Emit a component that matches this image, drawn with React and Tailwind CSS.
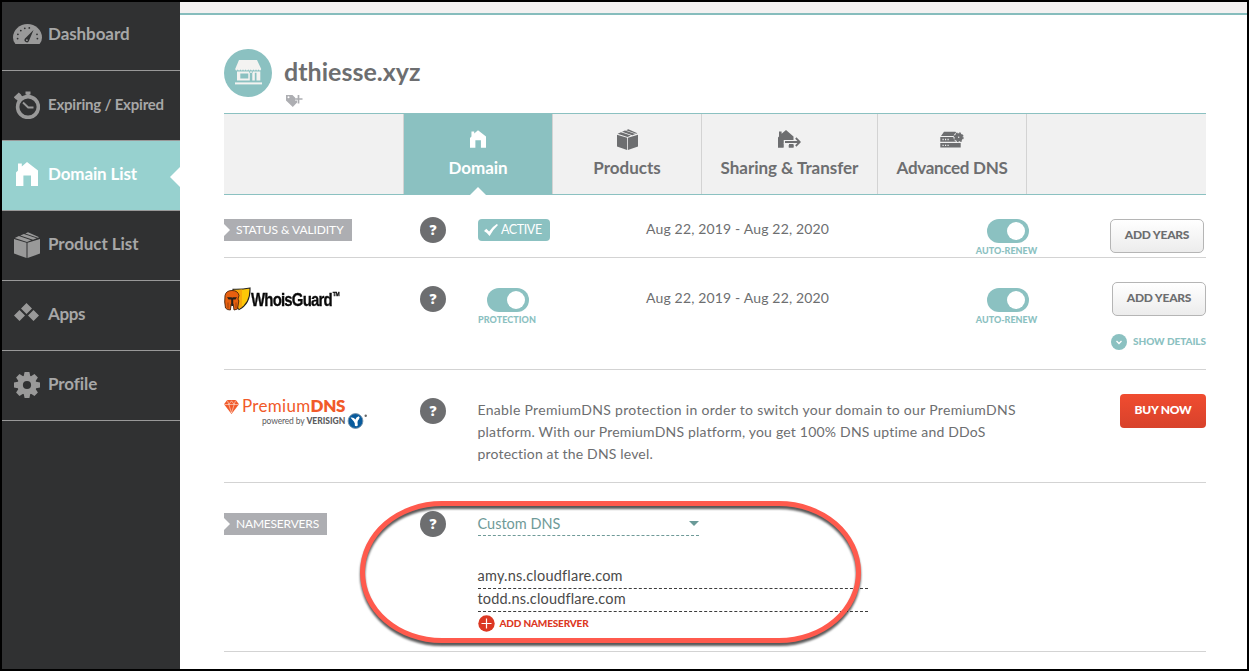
function HouseIcon({ className }) {
  return (
    <svg className={className} viewBox="0 0 22 24" fill="currentColor">
      <path d="M0 10.500 2 8.500V1.600h3.800v3L11 0l11 8.500V24h-7V13.600H7.400V24H0z" />
    </svg>
  );
}

function BoxIcon({ className }) {
  return (
    <svg className={className} viewBox="0 0 26 26" fill="currentColor">
      <path d="M0 7 12.500 10.800v15.200L0 21.600zM13.500 10.800 26 7v14.600L13.500 26zM.800 5.900 4.900 4.100l12.300 4.100-4.200 1.700zM6.300 3.500l3.600-1.500 12.800 4.200-3.700 1.500zM11.300 1.400 14 .200l11.200 5-1.500.6z" />
    </svg>
  );
}

function GaugeIcon() {
  const ticks = [[4.6, 14.6], [4.9, 10.3], [7.8, 6.6], [11.8, 4.3], [16.3, 3.9], [24, 10.3], [24.4, 14.6]];
  return (
    <svg className="h-5 w-[29px]" viewBox="0 0 29 20">
      <path d="M2.400 20Q0 17.500 0 13.500A14.500 13.500 0 0 1 29 13.500Q29 17.500 26.600 20z" fill="#999" />
      {ticks.map(([x, y]) => (
        <circle key={x + "-" + y} cx={x} cy={y} r=".9" fill="#303132" />
      ))}
      <path d="M20.500 6 12 14.600a2.300 2.300 0 1 0 4 2.200z" fill="#303132" />
      <circle cx="13.9" cy="16.2" r=".9" fill="#999" />
    </svg>
  );
}

function StopwatchIcon() {
  return (
    <svg className="h-[28px] w-[26px]" viewBox="0 0 26 28" fill="none" stroke="#999">
      <circle cx="14" cy="16" r="10.4" strokeWidth="3.6" />
      <path d="M14 6V1M11.500 1.900h5" strokeWidth="3" />
      <path d="M3.500 9.500 8 5M1 7.500 6 2.600" strokeWidth="3.4" />
      <path d="M9 11.500l5.200 5h5.300" strokeWidth="1.9" />
    </svg>
  );
}

function AppsIcon() {
  return (
    <svg className="h-[18px] w-[25px]" viewBox="0 0 25 18" fill="#999">
      <path d="M12.500 0 18 5.500 12.500 11 7 5.500zM5.500 7 11 12.500 5.500 18 0 12.500zM19.500 7l5.500 5.500-5.500 5.500-5.500-5.500z" />
    </svg>
  );
}

function GearIcon({ className, hole }) {
  return (
    <svg className={className} viewBox="0 0 26 26" fill="currentColor">
      {[0, 45, 90, 135].map((a) => (
        <path key={a} d="M10.600 0h4.800l1.100 5v16l-1.100 5h-4.800l-1.100-5V5z" transform={`rotate(${a} 13 13)`} />
      ))}
      <circle cx="13" cy="13" r="9.6" />
      <circle cx="13" cy="13" r="4.1" fill={hole} />
    </svg>
  );
}

function TransferIcon() {
  return (
    <svg className="h-[18px] w-[23px]" viewBox="0 0 23 18">
      <path d="M0 7.500 1 6.600V1.500h2.600v2.200L8 0l7.500 6.500v11H11V13H5.500v4.500H0z" fill="#6d6e70" />
      <path d="M5.500 12h17M17.800 7.800l4.200 4.200-4.200 4.200" fill="none" stroke="#f1f1f1" strokeWidth="4" />
      <path d="M0 8h5.500v9.500H0zM10.700 15h4.800v2.500h-4.800z" fill="#6d6e70" />
      <path d="M7 12h14.500M17.800 8l4 4-4 4" fill="none" stroke="#6d6e70" strokeWidth="1.8" />
    </svg>
  );
}

function ServerIcon() {
  return (
    <svg className="h-[17px] w-[24px]" viewBox="0 0 24 17">
      <path d="M4 .800h11.500L18 5H1zM.300 6h20.400v4.800H.300zM.300 12h20.400v4.500H.300z" fill="#6d6e70" />
      <path d="M2.500 8.500h1.200M5 8.500h1.200M7.500 8.500h1.200M2.500 14.400h1.200M5 14.400h1.200M7.500 14.400h1.200" stroke="#f1f1f1" strokeWidth="1.4" />
      <circle cx="18.7" cy="6.3" r="5.2" fill="#f1f1f1" />
      <circle cx="18.7" cy="6.3" r="4.1" fill="#6d6e70" />
      <circle cx="18.7" cy="6.3" r="4.3" fill="none" stroke="#6d6e70" strokeWidth="1.4" strokeDasharray="1.69 1.69" />
      <circle cx="18.7" cy="6.3" r=".7" fill="#f1f1f1" />
    </svg>
  );
}

function StoreIcon() {
  return (
    <svg className="h-[25px] w-[27px]" viewBox="0 0 27 25" fill="#f4f3f1">
      <path d="M4 0h18l4.200 9H.200z" />
      <path d="M.200 9h26q-.4 1.500-1.300 1.500T23.600 9.300q-.4 1.200-1.300 1.200T21 9.300q-.4 1.200-1.300 1.200t-1.300-1.200q-.4 1.200-1.300 1.200t-1.300-1.200q-.4 1.200-1.300 1.200t-1.300-1.200q-.4 1.200-1.300 1.200t-1.300-1.200q-.4 1.200-1.300 1.200T8 9.300q-.4 1.200-1.300 1.200T5.400 9.300q-.4 1.200-1.300 1.200T2.800 9.300q-.4 1.200-1.300 1.200T.200 9z" />
      <path fillRule="evenodd" d="M2 11.500h12.800v9H2zm3.300 2v5h8v-5zM17.300 11.500h8v9h-3.800v-7.700h-1.700v7.700h-2.500zM14 11.500h4v1.300h-4z" />
      <path d="M0 22.400h27v2H0z" />
    </svg>
  );
}

const nav = [
  { label: "Dashboard", icon: <GaugeIcon />, box: "h-[69px] pb-[4px] pl-[11px]", text: "ml-[6px] text-[17px] tracking-[-0.08px]" },
  { label: "Expiring / Expired", icon: <StopwatchIcon />, box: "h-[70px] pb-[2px] pl-[12px]", text: "ml-[8px] text-[15px] tracking-[-0.2px]" },
  { label: "Domain List", icon: <HouseIcon className="h-6 w-[22px]" />, box: "h-[70px] bg-[#97d1cf] pb-[3px] pl-[14px] text-white", text: "ml-[10px] text-[17px] tracking-[-0.13px]", active: true },
  { label: "Product List", icon: <BoxIcon className="h-[26px] w-[26px]" />, box: "h-[70px] pb-[2px] pl-[12px]", text: "-mt-px ml-[8px] text-[17px] tracking-[-0.05px]" },
  { label: "Apps", icon: <span className="-mt-[4px]"><AppsIcon /></span>, box: "h-[70px] pb-[3px] pl-[12px]", text: "ml-[9px] text-[17px] tracking-[-0.39px]" },
  { label: "Profile", icon: <GearIcon className="h-[26px] w-[26px]" hole="#303132" />, box: "h-[70px] pb-[2px] pl-[12px]", text: "-mt-px ml-[8px] text-[17px] tracking-[-0.08px]" },
];

function Sidebar() {
  return (
    <nav className="w-[178px] shrink-0 bg-[#303132] font-bold text-[#999]">
      {nav.map((n) => (
        <a key={n.label} className={`relative flex items-center border-b border-[#999] ${n.box}`}>
          {n.icon}
          <span className={`whitespace-nowrap ${n.text} ${n.active ? "text-white" : "text-[#a7a7a7]"}`}>{n.label}</span>
          {n.active && (
            <svg className="absolute top-[26px] right-0 h-5 w-2.5" viewBox="0 0 10 20" fill="#fff">
              <path d="M10 0v20L0 10z" />
            </svg>
          )}
        </a>
      ))}
    </nav>
  );
}

function Help() {
  return (
    <span className="flex size-[26px] items-center justify-center rounded-full bg-[#6d6e70] font-['Open_Sans'] text-[14px] leading-none font-extrabold text-white">
      ?
    </span>
  );
}

function Tag({ children, className }) {
  return (
    <span className={`flex h-[22px] items-center bg-[#adaeb2] text-[12px] whitespace-nowrap text-white ${className}`}>
      <svg className="mr-[6px] h-3 w-[6px]" viewBox="0 0 6 12" fill="#fff">
        <path d="M0 0l6 6-6 6z" />
      </svg>
      <span className="-mt-px">{children}</span>
    </span>
  );
}

function Toggle({ label, className, text }) {
  return (
    <div className="flex w-[62px] flex-col items-center">
      <span className={`relative flex h-6 w-[42px] items-center justify-end rounded-full bg-[#8bc1c1] pr-[4px] ${className}`}>
        <span className="size-[18px] rounded-full bg-white" />
      </span>
      <span className={`mt-[3px] text-[9px] leading-[10px] font-black whitespace-nowrap text-[#8bc1c1] ${text}`}>{label}</span>
    </div>
  );
}

function GrayButton() {
  return (
    <button className="h-[34px] w-[94px] rounded-[5px] border border-[#b5b5b5] bg-linear-to-b from-white to-[#ececec] pb-[3px] text-[12px] font-black tracking-[-0.24px] whitespace-nowrap text-[#6d6e70]">
      ADD YEARS
    </button>
  );
}

function WhoisGuardLogo() {
  return (
    <div className="flex h-6 w-[118px] items-center">
      <svg className="h-6 w-[27px] shrink-0" viewBox="0 0 27 24">
        <path d="M9 2.200Q18 2.500 26 1 26.500 17 15 22.500L9 12z" fill="#fdc708" stroke="#222" strokeWidth="1.1" />
        <path d="M9 3Q14 3.200 18 2.500V20l-3 2L9 12z" fill="#f9a80a" />
        <path d="M1 8.500Q2 3.500 8 3.500t7 5L14 12l.8 2-1.300 8-3.500 1-.8-6h-2l-.8 6-3-.5L1.500 21 .700 15z" fill="#e8600f" stroke="#4a240c" strokeWidth=".9" />
        <path d="M3 10.200h4.400l.8.600.8-.6h4l-1.500 2.200H9.200V19H7.200v-6.600H4.600z" fill="#28201a" />
        <path d="M4 15.500v6M12 15.500v5.500" stroke="#8a3b0c" strokeWidth=".8" />
      </svg>
      <span className="origin-left scale-x-[0.833] pt-px font-['Liberation_Sans'] text-[18px] leading-6 font-bold tracking-[-1px] whitespace-nowrap text-[#0a0a0a] [-webkit-text-stroke:0.3px_#0a0a0a]">
        WhoisGuard
        <sup className="ml-[1px] align-[7px] text-[6px] leading-none tracking-[-0.3px]">TM</sup>
      </span>
    </div>
  );
}

function PremiumDnsLogo() {
  return (
    <div className="w-[145px]">
      <div className="flex h-[18px] items-center">
        <svg className="h-[14px] w-[15px]" viewBox="0 0 15 14">
          <path d="M3.200 0h8.600L15 4.300 7.500 14 0 4.300z" fill="#f15a29" />
          <path d="M.400 4.500h14.200M4.800 4.500 7.500 13l2.700-8.500M3.400.6l1.500 3.800L7.500.8l2.600 3.600L11.600.6" fill="none" stroke="#fff" strokeWidth=".5" />
        </svg>
        <span className="-mt-[2px] ml-[3px] text-[17px] leading-[18px] whitespace-nowrap text-[#f15a29]">
          <span className="tracking-[0.3px]">Premium</span>
          <span className="font-extrabold tracking-[-0.3px]">DNS</span>
        </span>
      </div>
      <div className="-mt-[3px] flex items-center pl-[38px] text-[8.5px] leading-4 whitespace-nowrap text-[#5b5c5e]">
        <span className="tracking-[-0.16px]">powered by</span>
        <span className="ml-[2px] font-black">VERISIGN</span>
        <svg className="ml-[2px] h-4 w-5" viewBox="0 0 20 16">
          <circle cx="8.500" cy="8" r="7.400" fill="#075a9c" stroke="#7792a8" strokeWidth=".9" />
          <path d="M3.500 4.600Q6.900 4 8.400 6.600q.6-2.800 3.300-3.400 1.800 1.200.2 3Q10.300 7.800 10.500 9.500l.3 3.100q-1.500 1-2.900.2.300-3-1.200-4.600T3.500 4.600z" fill="#fff" />
          <circle cx="18.700" cy="2.700" r="1.200" fill="#666" />
        </svg>
      </div>
    </div>
  );
}

const tabs = [
  { label: "Domain", w: "w-[149px]", ls: "tracking-[-0.1px]", icon: <HouseIcon className="h-[18px] w-4" />, active: true },
  { label: "Products", w: "w-[149px]", ls: "tracking-[0px]", icon: <BoxIcon className="h-[21px] w-[21px]" /> },
  { label: "Sharing & Transfer", w: "w-[176px]", ls: "tracking-[-0.03px]", icon: <TransferIcon /> },
  { label: "Advanced DNS", w: "w-[149px]", ls: "tracking-[-0.3px]", icon: <ServerIcon /> },
];

function Tabs() {
  return (
    <div className="mt-[16px] flex h-[82px] border-y border-[#8bc1c1] bg-[#f1f1f1] pl-[179px]">
      {tabs.map((t) => (
        <div
          key={t.label}
          className={`relative flex flex-col items-center border-l border-[#d3d3d3] text-[17px] font-bold whitespace-nowrap ${t.w} ${t.active ? "bg-[#8bc1c1] text-white" : "text-[#6d6e70]"}`}
        >
          <span className="mt-[13px] flex h-6 items-center">{t.icon}</span>
          <span className={`mt-[6px] leading-[21px] ${t.ls}`}>{t.label}</span>
          {t.active && (
            <svg className="absolute bottom-[-1px] left-[66px] h-2 w-4" viewBox="0 0 16 8" fill="#fff">
              <path d="M8 0l8 8H0z" />
            </svg>
          )}
        </div>
      ))}
      <div className="border-l border-[#d3d3d3]" />
    </div>
  );
}

function Dates({ className }) {
  return (
    <div className={`w-[329px] leading-[20px] tracking-[0.16px] whitespace-nowrap ${className}`}>Aug 22, 2019 - Aug 22, 2020</div>
  );
}

export default function App() {
  return (
    <div className="relative h-[671px] w-[1249px] overflow-hidden border-2 border-black bg-white font-['Lato',sans-serif] text-[14px] text-[#6d6e70]">
      <div className="flex h-full">
        <Sidebar />
        <main className="w-[1067px]">
          <div className="h-[13px] border-b-2 border-[#86bdbd] bg-[#f3f1f1]" />
          <div className="w-[1026px] pl-[44px]">
            <header className="flex h-[82px] pt-[34px]">
              <span className="flex size-12 items-center justify-center rounded-full bg-[#8bc1c1] pb-px">
                <StoreIcon />
              </span>
              <div className="ml-3">
                <h1 className="mt-[7px] text-[25px] leading-[30px] font-bold tracking-[0.02px]">dthiesse.xyz</h1>
                <svg className="mt-[8px] ml-[2px] h-[13px] w-[17px]" viewBox="0 0 17 13" fill="#adaeb2">
                  <path fillRule="evenodd" d="M0 1h6.500l6 6L6.800 13 0 6.500zM2.500 2.300a1 1 0 1 0 0 2 1 1 0 0 0 0-2z" />
                  <path d="M9 5h8M12.500 .500v8.500" stroke="#fff" strokeWidth="3" />
                  <path d="M9 5h7.500M12.500 1v8.500" stroke="#adaeb2" strokeWidth="1.7" />
                </svg>
              </div>
            </header>
            <Tabs />

            <section className="flex h-[63px] border-b border-[#d3d3d3] pt-[22px]">
              <div className="w-[196px] pt-[2px]">
                <Tag className="w-[128px] tracking-[-0.08px]">STATUS &amp; VALIDITY</Tag>
              </div>
              <div className="w-[58px]"><Help /></div>
              <div className="w-[168px] pt-[2px]">
                <span className="flex h-[22px] w-[72px] items-center rounded-[4px] bg-[#8bc1c1] pl-[6px] text-[12.5px] tracking-[-0.4px] text-white">
                  <svg className="mr-[3px] h-3 w-[14px]" viewBox="0 0 14 12" fill="#fff">
                    <path d="M0 7l2.300-2.200 2.800 2.700Q8 3 12.800 0l1.200 1Q9 5.500 5.600 12 3.500 9 0 7z" />
                  </svg>
                  ACTIVE
                </span>
              </div>
              <Dates className="pt-[2px]" />
              <div className="w-[135px] pt-[2px]"><Toggle label="AUTO-RENEW" className="left-[2px]" text="relative left-[0.5px]" /></div>
              <div className="pt-[2px]"><GrayButton /></div>
            </section>

            <section className="flex h-[112px] border-b border-[#d3d3d3] pt-[24px]">
              <div className="w-[196px] pt-[5px]"><WhoisGuardLogo /></div>
              <div className="w-[57px] pt-[4px]"><Help /></div>
              <div className="w-[169px] pt-[6px]"><Toggle label="PROTECTION" text="relative -left-px tracking-[0.07px]" /></div>
              <Dates className="pt-[6px]" />
              <div className="w-[62px] pt-[6px]"><Toggle label="AUTO-RENEW" className="left-[2px]" text="relative left-[0.5px]" /></div>
              <div className="ml-auto flex flex-col items-end">
                <GrayButton />
                <a className="mt-[18px] flex items-center text-[10px] leading-4 font-black tracking-[-0.05px] whitespace-nowrap text-[#8bc1c1]">
                  <svg className="mr-[6px] size-4" viewBox="0 0 16 16">
                    <circle cx="8" cy="8" r="8" fill="#8bc1c1" />
                    <path d="M5.500 7 8 9.500 10.500 7" fill="none" stroke="#fff" strokeWidth="1.3" />
                  </svg>
                  <span className="-mt-[2px]">SHOW DETAILS</span>
                </a>
              </div>
            </section>

            <section className="flex h-[113px] border-b border-[#d3d3d3] pt-[24px]">
              <div className="w-[196px] pt-[4px]"><PremiumDnsLogo /></div>
              <div className="w-[57.5px] pt-[4px]"><Help /></div>
              <p className="pt-[5px] leading-[22px] whitespace-nowrap">
                <span className="tracking-[0.315px]">Enable PremiumDNS protection in order to switch your domain to our PremiumDNS</span>
                <br />
                <span className="tracking-[0.205px]">platform. With our PremiumDNS platform, you get 100% DNS uptime and DDoS</span>
                <br />
                <span className="tracking-[0.17px]">protection at the DNS level.</span>
              </p>
              <button className="ml-auto h-[34px] w-[86px] rounded-[4px] bg-linear-to-b from-[#f04c30] to-[#d8422b] pb-[3px] text-[12px] font-black tracking-[-0.22px] whitespace-nowrap text-white">
                BUY NOW
              </button>
            </section>

            <section className="flex h-[169px] border-b border-[#d3d3d3] pt-[28px]">
              <div className="w-[196px] pt-[2px]">
                <Tag className="w-[103px] tracking-[-0.2px]">NAMESERVERS</Tag>
              </div>
              <div className="w-[57.5px]"><Help /></div>
              <div className="w-[390px] text-[14.5px]">
                <div className="flex h-[25px] w-[221px] items-center justify-between border-b border-dashed border-[#6f9a98] pt-px text-[#6f9a98]">
                  Custom DNS
                  <svg className="h-[5px] w-[10px]" viewBox="0 0 10 5" fill="#6a9a98">
                    <path d="M0 0h10L5 5z" />
                  </svg>
                </div>
                <div className="mt-[30px] flex h-[23px] items-center border-b border-dashed border-[#3d3d3d] pb-[2px] tracking-[0.22px] text-[#4a4a4a]">amy.ns.cloudflare.com</div>
                <div className="flex h-[23px] items-center border-b border-dashed border-[#3d3d3d] pb-[2px] tracking-[0.18px] text-[#4a4a4a]">todd.ns.cloudflare.com</div>
                <a className="mt-[3px] flex items-center text-[10px] font-black tracking-[-0.17px] text-[#dc3823]">
                  <svg className="mr-[5px] size-[17px]" viewBox="0 0 17 17">
                    <circle cx="8.5" cy="8.5" r="8.2" fill="#dc3823" />
                    <path d="M3.500 8.500h10M8.500 3.500v10" stroke="#fff" strokeWidth="1.2" />
                  </svg>
                  ADD NAMESERVER
                </a>
              </div>
            </section>
          </div>
        </main>
      </div>
      <div className="absolute top-[499px] left-[358px] h-[142px] w-[501px] rounded-[82px/71px] border-[5px] border-[#ff5a4d] drop-shadow-[0_3px_1px_rgba(0,0,0,0.65)]" />
    </div>
  );
}
